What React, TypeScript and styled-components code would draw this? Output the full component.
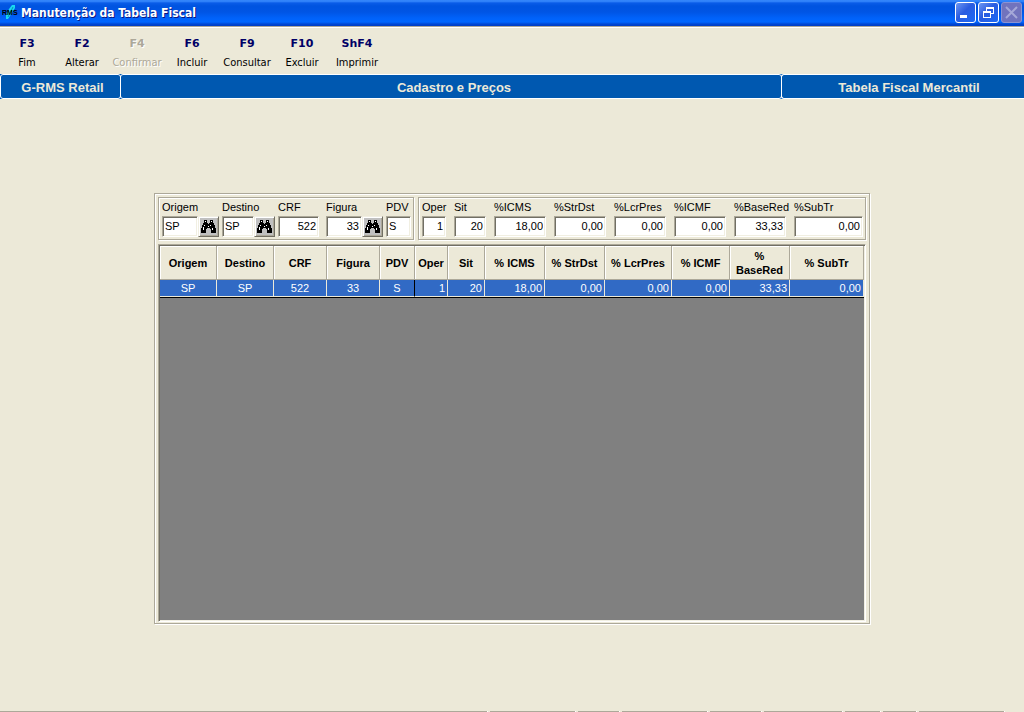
import React from 'react';
import styled, { createGlobalStyle, css } from 'styled-components';

const sans = '"Liberation Sans", Arial, sans-serif';
const tahoma = '"DejaVu Sans Condensed", Tahoma, "DejaVu Sans", sans-serif';
const verdana = '"DejaVu Sans", Verdana, sans-serif';

const c = {
  face: '#ece9d8',
  shadow: '#aca899',
  dark: '#716f64',
  light: '#f1efe2',
  bar: '#0058b0',
  select: '#316ac5',
};

const GlobalStyle = createGlobalStyle`
  *, *::before, *::after { box-sizing: border-box; }
  body { margin: 0; background: ${c.face}; font: 11px/13px ${sans}; color: #000; }
`;

const etched = css`
  border: 1px solid ${c.shadow};
  box-shadow: inset 1px 1px #fff, 1px 1px #fff;
`;

const sunken = css`
  border: 1px solid;
  border-color: ${c.shadow} #fff #fff ${c.shadow};
  box-shadow: inset 1px 1px ${c.dark}, inset -1px -1px ${c.light};
`;

const Page = styled.div`
  display: flex;
  flex-direction: column;
  min-height: 100vh;
`;

const TitleBar = styled.header`
  display: flex;
  align-items: flex-start;
  gap: 2px;
  height: 26px;
  padding: 2px 2px 0;
  background: linear-gradient(#2b7df5 0, #3a8cff 1px, #0a5ce8 3px, #0054e0 6px, #0055e5 12px, #0062fa 18px, #0066ff 22px, #0048d4 24px, #003cc4 26px);
`;

const Title = styled.h1`
  flex: 1;
  margin: 0;
  font: bold 12px/22px ${tahoma};
  color: #fff;
  text-shadow: 1px 1px #0a1883;
`;

const WindowButton = styled.button`
  width: 21px;
  height: 21px;
  padding: 0;
  border: 1px solid #fff;
  border-radius: 3px;
  background: linear-gradient(135deg, #6d97f2, #2a5ce0 45%, #1c6af6);
  svg { display: block; }
  &:disabled {
    border-color: #8b93d3;
    background: #7173bd;
  }
`;

const Toolbar = styled.nav`
  display: flex;
  height: 48px;
  border-top: 1px solid ${c.shadow};
  box-shadow: inset 0 1px #fff;
`;

const ToolButton = styled.button`
  display: flex;
  flex-direction: column;
  align-items: center;
  gap: 5px;
  width: 55px;
  padding: 10px 1px 0 0;
  border: 0;
  background: none;
  font: 11px/14px ${tahoma};
  color: #000;
  white-space: nowrap;
  &:disabled { color: ${c.shadow}; text-shadow: 1px 1px #fff; }
`;

const KeyName = styled.span`
  font: bold 11px/14px ${verdana};
  color: #000066;
  ${ToolButton}:disabled & { color: inherit; }
`;

const Banner = styled.div`
  display: flex;
  height: 25px;
  overflow: hidden;
  background: ${c.bar};
`;

const BannerCell = styled.div<{ $width?: number; $indent?: number }>`
  flex: ${p => (p.$width ? `0 0 ${p.$width}px` : '1')};
  padding-left: ${p => p.$indent ?? 4}px;
  border: 1px solid #fff;
  border-radius: 3px;
  font: bold 13px/25px ${sans};
  color: ${c.face};
  text-align: center;
  & + & { margin-left: -1px; }
  &:last-child { border-right: 0; border-top-right-radius: 0; border-bottom-right-radius: 0; }
`;

const Main = styled.main`
  flex: 1;
  display: flex;
  justify-content: center;
  padding: 94px 16px 87px;
`;

const Panel = styled.section`
  ${etched}
  display: flex;
  flex-direction: column;
  gap: 3px;
  width: 100%;
  max-width: 716px;
  min-height: 300px;
  padding: 3px 3px 1px;
`;

const Groups = styled.form`
  display: flex;
  gap: 4px;
`;

const Group = styled.div<{ $columns: string; $gap: number; $grow?: boolean }>`
  ${etched}
  flex: ${p => (p.$grow ? '1' : '0 0 auto')};
  display: grid;
  grid-template-columns: ${p => p.$columns};
  column-gap: ${p => p.$gap}px;
  height: 43px;
  margin-bottom: 1px;
  padding: 1px 2px 0 3px;
`;

const Field = styled.div`
  display: flex;
  flex-direction: column;
  min-width: 0;
`;

const FieldLabel = styled.label`
  font: 11px/17px ${sans};
  white-space: nowrap;
`;

const Control = styled.div<{ $inset?: boolean }>`
  display: flex;
  padding-right: ${p => (p.$inset ? 4 : 0)}px;
`;

const Input = styled.input<{ $right?: boolean }>`
  ${sunken}
  flex: 1;
  min-width: 0;
  width: 100%;
  height: 21px;
  padding: 0 2px 1px;
  border-radius: 0;
  outline: 0;
  background: #fff;
  font: 11px/17px ${sans};
  color: #000;
  text-align: ${p => (p.$right ? 'right' : 'left')};
`;

const SearchButton = styled.button`
  flex: 0 0 21px;
  height: 21px;
  padding: 2px;
  border: 1px solid;
  border-color: ${c.light} ${c.dark} ${c.dark} ${c.light};
  box-shadow: inset 1px 1px #fff, inset -1px -1px ${c.shadow};
  background: #c0c0c0;
  svg { display: block; }
`;

const GridFrame = styled.div`
  ${sunken}
  flex: 1;
  padding: 1px;
  background: #808080;
`;

const Grid = styled.table`
  width: 100%;
  table-layout: fixed;
  border-collapse: separate;
  border-spacing: 0;
  border-bottom: 1px solid #000;
`;

const HeadCell = styled.th`
  height: 34px;
  padding: 0;
  border: solid ${c.shadow};
  border-width: 0 1px 1px 0;
  box-shadow: inset 1px 1px #fff;
  background: ${c.face};
  font: bold 11px/14px ${sans};
`;

const Cell = styled.td<{ $right?: boolean; $split?: boolean }>`
  height: 17px;
  padding: 0 2px;
  border: solid ${c.face};
  border-width: 0 1px 1px 0;
  border-right-color: ${p => (p.$split ? '#000' : c.face)};
  background: ${c.select};
  font: 11px/16px ${sans};
  color: #fff;
  text-align: ${p => (p.$right ? 'right' : 'center')};
`;

const StatusBar = styled.footer`
  display: flex;
  gap: 2px;
  height: 1px;
  padding-right: 19px;
`;

const StatusPane = styled.div<{ $width?: number }>`
  flex: ${p => (p.$width ? `0 0 ${p.$width}px` : '1')};
  border-right: 1px solid #fff;
  background: ${c.shadow};
`;

const Logo = () => (
  <svg width="17" height="20" viewBox="0 0 17 20" aria-hidden="true">
    <path d="M10 3h3v3l-3 5-4 6H4v-4l3-6z" fill="#18d8f0" />
    <path d="M11 5L6 15" stroke="#0890b0" />
    <text x="0" y="13" fontFamily="Liberation Sans" fontWeight="bold" fontSize="7" fill="#000">RMS</text>
  </svg>
);

const Binoculars = () => (
  <svg width="15" height="15" viewBox="0 0 15 15" shapeRendering="crispEdges" aria-hidden="true">
    <path d="M3 1h3v3h1v1h1V4h1V1h3v3h1v2h1v3h1v5h-5v-4H9V9H6v1H5v4H0V9h1V6h1V4h1z" fill="#000" />
    <path d="M4 2h1v1H4zM10 2h1v1h-1zM3 6h1v1H3zM9 6h1v1H9zM2 8h1v3H2zM11 9h1v2h-1zM7 7h1v1H7z" fill="#fff" />
  </svg>
);

const tools = [
  { key: 'F3', label: 'Fim' },
  { key: 'F2', label: 'Alterar' },
  { key: 'F4', label: 'Confirmar', disabled: true },
  { key: 'F6', label: 'Incluir' },
  { key: 'F9', label: 'Consultar' },
  { key: 'F10', label: 'Excluir' },
  { key: 'ShF4', label: 'Imprimir' },
];

interface FieldSpec {
  id: string;
  label: string;
  value: string;
  right?: boolean;
  search?: boolean;
  inset?: boolean;
}

const keyFields: FieldSpec[] = [
  { id: 'origem', label: 'Origem', value: 'SP', search: true },
  { id: 'destino', label: 'Destino', value: 'SP', search: true },
  { id: 'crf', label: 'CRF', value: '522', right: true, inset: true },
  { id: 'figura', label: 'Figura', value: '33', right: true, search: true },
  { id: 'pdv', label: 'PDV', value: 'S' },
];

const rateFields: FieldSpec[] = [
  { id: 'oper', label: 'Oper', value: '1', right: true },
  { id: 'sit', label: 'Sit', value: '20', right: true },
  { id: 'icms', label: '%ICMS', value: '18,00', right: true },
  { id: 'strdst', label: '%StrDst', value: '0,00', right: true },
  { id: 'lcrpres', label: '%LcrPres', value: '0,00', right: true },
  { id: 'icmf', label: '%ICMF', value: '0,00', right: true },
  { id: 'basered', label: '%BaseRed', value: '33,33', right: true },
  { id: 'subtr', label: '%SubTr', value: '0,00', right: true },
];

const columns = [
  { title: 'Origem', width: 57 },
  { title: 'Destino', width: 57 },
  { title: 'CRF', width: 53 },
  { title: 'Figura', width: 53 },
  { title: 'PDV', width: 35 },
  { title: 'Oper', width: 33 },
  { title: 'Sit', width: 37 },
  { title: '% ICMS', width: 60 },
  { title: '% StrDst', width: 60 },
  { title: '% LcrPres', width: 67 },
  { title: '% ICMF', width: 58 },
  { title: '% BaseRed', width: 60 },
  { title: '% SubTr', width: 74 },
];

const rows = [['SP', 'SP', '522', '33', 'S', '1', '20', '18,00', '0,00', '0,00', '0,00', '33,33', '0,00']];

const statusPanes = [86, 42, 86, 52, 79, 36, 34, 86];

const FormField = ({ id, label, value, right, search, inset }: FieldSpec) => (
  <Field>
    <FieldLabel htmlFor={id}>{label}</FieldLabel>
    <Control $inset={inset}>
      <Input id={id} defaultValue={value} $right={right} />
      {search && (
        <SearchButton type="button" aria-label={`Pesquisar ${label}`}>
          <Binoculars />
        </SearchButton>
      )}
    </Control>
  </Field>
);

export default function App() {
  return (
    <Page>
      <GlobalStyle />
      <TitleBar>
        <Logo />
        <Title>Manutenção da Tabela Fiscal</Title>
        <WindowButton aria-label="Minimizar">
          <svg width="19" height="19"><path d="M4 12h7v3H4z" fill="#fff" /></svg>
        </WindowButton>
        <WindowButton aria-label="Restaurar">
          <svg width="19" height="19" fill="none" stroke="#fff" shapeRendering="crispEdges">
            <path d="M7 5.5h8M7 4.5h8M7.5 5v3M14.5 5v6M12 10.5h3M4 8.5h8M4 9.5h8M4.5 9v6M11.5 9v6M4 14.5h8" />
          </svg>
        </WindowButton>
        <WindowButton aria-label="Fechar" disabled>
          <svg width="19" height="19"><path d="M4 4l11 11M15 4L4 15" stroke="#a5a8d8" strokeWidth="2" /></svg>
        </WindowButton>
      </TitleBar>
      <Toolbar>
        {tools.map(t => (
          <ToolButton key={t.key} disabled={t.disabled}>
            <KeyName>{t.key}</KeyName>
            {t.label}
          </ToolButton>
        ))}
      </Toolbar>
      <Banner>
        <BannerCell $width={121}>G-RMS Retail</BannerCell>
        <BannerCell $indent={6}>Cadastro e Preços</BannerCell>
        <BannerCell $width={243} $indent={12}>Tabela Fiscal Mercantil</BannerCell>
      </Banner>
      <Main>
        <Panel>
          <Groups>
            <Group $columns="57px 53px 45px 57px 25px" $gap={3}>
              {keyFields.map(f => <FormField key={f.id} {...f} />)}
            </Group>
            <Group $columns="24px 32px repeat(5, 52px) 1fr" $gap={8} $grow>
              {rateFields.map(f => <FormField key={f.id} {...f} />)}
            </Group>
          </Groups>
          <GridFrame>
            <Grid>
              <colgroup>
                {columns.map(col => <col key={col.title} width={col.width} />)}
              </colgroup>
              <thead>
                <tr>{columns.map(col => <HeadCell key={col.title} scope="col">{col.title}</HeadCell>)}</tr>
              </thead>
              <tbody>
                {rows.map((row, r) => (
                  <tr key={r}>
                    {row.map((value, i) => (
                      <Cell key={i} $right={i > 4} $split={i === 4}>{value}</Cell>
                    ))}
                  </tr>
                ))}
              </tbody>
            </Grid>
          </GridFrame>
        </Panel>
      </Main>
      <StatusBar>
        <StatusPane />
        {statusPanes.map((w, i) => <StatusPane key={i} $width={w} />)}
      </StatusBar>
    </Page>
  );
}
